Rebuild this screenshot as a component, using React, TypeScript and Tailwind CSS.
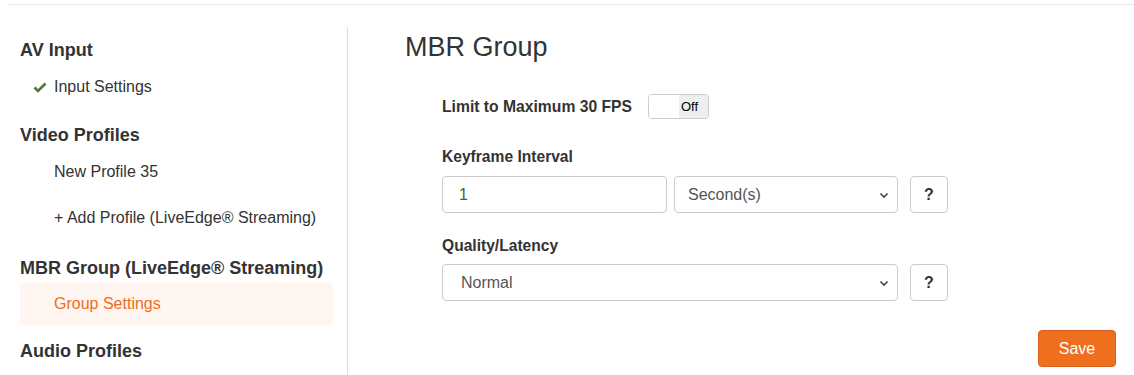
import React from 'react';

const font = { fontFamily: '"Liberation Sans", Arial, sans-serif' };

function Heading({ children, className = '' }: { children: React.ReactNode; className?: string }) {
  return <div className={`h-[26px] leading-[26px] text-[18px] font-bold text-[#333] ${className}`}>{children}</div>;
}

function NavItem({ children, active = false, check = false }: { children: React.ReactNode; active?: boolean; check?: boolean }) {
  return (
    <div
      className={`relative h-[44px] flex items-center pl-[34px] text-[16px] rounded-[5px] ${
        active ? 'bg-[#fff6f1] text-[#f26b21]' : 'text-[#333]'
      }`}
    >
      {check && (
        <svg className="absolute left-[13px] top-[17px]" width="14" height="11" viewBox="0 0 14 11">
          <path d="M1.5 5.5 L5 9 L12.5 1.5" fill="none" stroke="#4c7a2f" strokeWidth="2.6" />
        </svg>
      )}
      {children}
    </div>
  );
}

function Chevron() {
  return (
    <svg width="10" height="7" viewBox="0 0 10 7" className="absolute right-[8px] top-[15px]">
      <path d="M1.5 1.5 L5 5 L8.5 1.5" fill="none" stroke="#444" strokeWidth="1.6" />
    </svg>
  );
}

function HelpButton() {
  return (
    <button className="w-[38px] h-[37px] border border-[#ccc] rounded-[4px] bg-white text-[16px] font-bold text-[#333] flex items-center justify-center">
      ?
    </button>
  );
}

export default function App() {
  return (
    <div style={font} className="w-[1134px] h-[375px] bg-white overflow-hidden pt-1">
      <div className="ml-[9px] h-px bg-[#e6e6e6]" />
      <div className="flex mt-[22px]">
        <div className="w-[348px] h-[360px] border-r border-[#ddd] pl-5 pr-[14px] pt-[10px]">
          <Heading className="mb-[2px]">AV Input</Heading>
          <NavItem check>Input Settings</NavItem>
          <Heading className="mt-[13px] mb-[2px]">Video Profiles</Heading>
          <NavItem>New Profile 35</NavItem>
          <div className="h-[2px]" />
          <NavItem>+ Add Profile (LiveEdge® Streaming)</NavItem>
          <Heading className="mt-[15px] mb-px">MBR Group (LiveEdge® Streaming)</Heading>
          <NavItem active>Group Settings</NavItem>
          <Heading className="mt-[12px]">Audio Profiles</Heading>
        </div>

        <div className="flex-1 pl-[57px] pr-[18px] pt-1">
          <div className="h-[32px] leading-[32px] text-[27px] text-[#333]">MBR Group</div>
          <div className="pl-[37px]">
            <div className="mt-[31px] flex items-center h-[25px]">
              <div className="w-[206px] text-[15.7px] font-bold text-[#333]">Limit to Maximum 30 FPS</div>
              <div className="flex w-[61px] h-[25px] border border-[#ccc] rounded-[4px] overflow-hidden">
                <div className="w-[30px] bg-white" />
                <div className="flex-1 bg-[#eee] text-[13px] text-black flex items-center pl-[2px]">Off</div>
              </div>
            </div>

            <div className="mt-[28px] h-[20px] leading-[20px] text-[15.6px] font-bold text-[#333]">Keyframe Interval</div>
            <div className="mt-[9px] flex">
              <div className="w-[225px] h-[37px] border border-[#ccc] rounded-[4px] flex items-center pl-4 text-[16px] text-[#555]">1</div>
              <div className="relative ml-[7px] w-[224px] h-[37px] border border-[#ccc] rounded-[4px] flex items-center pl-[13px] text-[16px] text-[#555]">
                Second(s)
                <Chevron />
              </div>
              <div className="ml-[12px]">
                <HelpButton />
              </div>
            </div>

            <div className="mt-[23px] h-[20px] leading-[20px] text-[15.6px] font-bold text-[#333]">Quality/Latency</div>
            <div className="mt-[8px] flex">
              <div className="relative w-[456px] h-[37px] border border-[#ccc] rounded-[4px] flex items-center pl-[18px] text-[16px] text-[#555]">
                Normal
                <Chevron />
              </div>
              <div className="ml-[12px]">
                <HelpButton />
              </div>
            </div>
          </div>

          <div className="mt-[29px] flex justify-end">
            <button className="w-[78px] h-[37px] rounded-[4px] bg-[#ee6f1d] border border-[#d9601a] text-white text-[16px]">
              Save
            </button>
          </div>
        </div>
      </div>
    </div>
  );
}
